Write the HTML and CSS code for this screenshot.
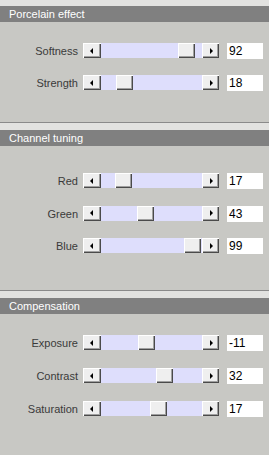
FILE: index.html
```html
<!DOCTYPE html>
<html>
<head>
<meta charset="utf-8">
<link rel="stylesheet" href="styles.css">
</head>
<body>
<div class="panel">
  <section class="group g1">
    <div class="strip"></div>
    <div class="title">Porcelain effect</div>
    <div class="rows">
      <div class="row"><span class="label">Softness</span><div class="scroll"><div class="btn"><span class="arrow-left"></span></div><div class="track"><div class="thumb" style="--p:0.92"></div></div><div class="btn"><span class="arrow-right"></span></div></div><span class="value">92</span></div>
      <div class="row"><span class="label">Strength</span><div class="scroll"><div class="btn"><span class="arrow-left"></span></div><div class="track"><div class="thumb" style="--p:0.18"></div></div><div class="btn"><span class="arrow-right"></span></div></div><span class="value">18</span></div>
    </div>
  </section>
  <section class="group g2">
    <div class="strip"></div>
    <div class="title">Channel tuning</div>
    <div class="rows">
      <div class="row"><span class="label">Red</span><div class="scroll"><div class="btn"><span class="arrow-left"></span></div><div class="track"><div class="thumb" style="--p:0.17"></div></div><div class="btn"><span class="arrow-right"></span></div></div><span class="value">17</span></div>
      <div class="row"><span class="label">Green</span><div class="scroll"><div class="btn"><span class="arrow-left"></span></div><div class="track"><div class="thumb" style="--p:0.43"></div></div><div class="btn"><span class="arrow-right"></span></div></div><span class="value">43</span></div>
      <div class="row"><span class="label">Blue</span><div class="scroll"><div class="btn"><span class="arrow-left"></span></div><div class="track"><div class="thumb" style="--p:0.99"></div></div><div class="btn"><span class="arrow-right"></span></div></div><span class="value">99</span></div>
    </div>
  </section>
  <section class="group g3">
    <div class="strip"></div>
    <div class="title">Compensation</div>
    <div class="rows">
      <div class="row"><span class="label">Exposure</span><div class="scroll"><div class="btn"><span class="arrow-left"></span></div><div class="track"><div class="thumb" style="--p:0.445"></div></div><div class="btn"><span class="arrow-right"></span></div></div><span class="value">-11</span></div>
      <div class="row"><span class="label">Contrast</span><div class="scroll"><div class="btn"><span class="arrow-left"></span></div><div class="track"><div class="thumb" style="--p:0.66"></div></div><div class="btn"><span class="arrow-right"></span></div></div><span class="value">32</span></div>
      <div class="row"><span class="label">Saturation</span><div class="scroll"><div class="btn"><span class="arrow-left"></span></div><div class="track"><div class="thumb" style="--p:0.585"></div></div><div class="btn"><span class="arrow-right"></span></div></div><span class="value">17</span></div>
    </div>
  </section>
</div>
</body>
</html>
```
FILE: styles.css
```css
html, body {
  margin: 0;
  padding: 0;
  background: #c8c8c4;
}
body {
  width: 269px;
  height: 455px;
  overflow: hidden;
  font-family: "Liberation Sans", Arial, sans-serif;
  font-size: 11px;
}
.panel {
  display: flex;
  flex-direction: column;
}
.group {
  display: flex;
  flex-direction: column;
}
.g2, .g3 {
  border-top: 1px solid #8a8a8a;
}
.strip {
  height: 7px;
  background: #e2e2e0;
}
.g1 .strip {
  height: 6px;
}
.title {
  height: 16px;
  line-height: 16px;
  background: #808080;
  color: #ffffff;
  padding-left: 9px;
  font-size: 11px;
}
.rows {
  display: flex;
  flex-direction: column;
}
.g1 .rows {
  padding: 21px 0 31px;
  gap: 16px;
}
.g2 .rows {
  padding: 27px 0 36px;
  gap: 16.5px;
}
.g3 .rows {
  padding: 21px 0 0;
  gap: 17px;
}
.row {
  display: flex;
  align-items: center;
  height: 16px;
}
.label {
  text-align: right;
  color: #3a3a3a;
  padding-right: 5px;
  box-sizing: border-box;
  width: 83px;
  line-height: 16px;
}
.scroll {
  display: flex;
  width: 136px;
  height: 15px;
  margin-right: 8px;
  align-self: flex-start;
}
.btn, .thumb {
  background: #efefef;
  box-shadow: inset 1px 1px 0 #ffffff, inset -1px -1px 0 #4a4a4a, inset -2px -2px 0 #a0a0a0;
  box-sizing: border-box;
}
.btn {
  width: 18px;
  height: 15px;
  display: flex;
  align-items: center;
  justify-content: center;
  flex: none;
}
.btn:last-child {
  width: 17px;
}
.arrow-left {
  width: 0;
  height: 0;
  border-top: 3px solid transparent;
  border-bottom: 3px solid transparent;
  border-right: 3px solid #000;
  margin-right: 1px;
}
.arrow-right {
  width: 0;
  height: 0;
  border-top: 3px solid transparent;
  border-bottom: 3px solid transparent;
  border-left: 3px solid #000;
  margin-left: 1px;
}
.track {
  position: relative;
  flex: 1;
  background: #dedefc;
  height: 15px;
}
.thumb {
  position: absolute;
  top: 0;
  left: calc(var(--p) * 84px);
  width: 17px;
  height: 15px;
}
.value {
  width: 36px;
  height: 16px;
  background: #ffffff;
  color: #000;
  line-height: 16px;
  padding-left: 2px;
  box-sizing: border-box;
  font-size: 12px;
}
```
